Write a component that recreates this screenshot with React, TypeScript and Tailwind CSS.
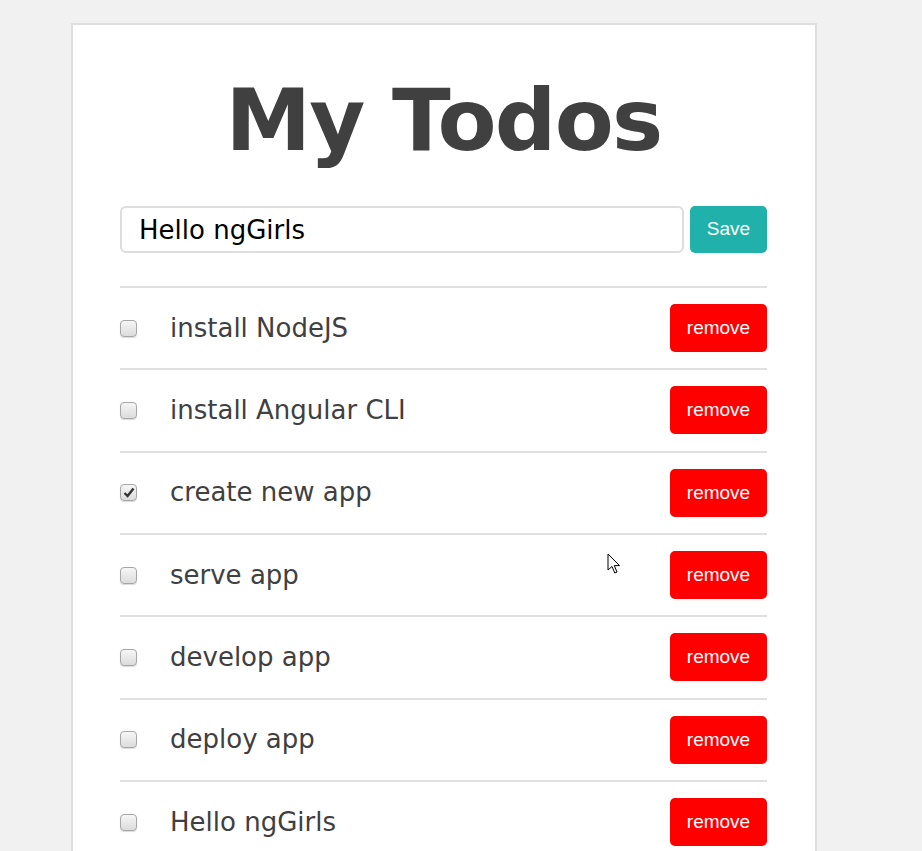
import React from "react";

const todos = [
  { title: "install NodeJS", done: false },
  { title: "install Angular CLI", done: false },
  { title: "create new app", done: true },
  { title: "serve app", done: false },
  { title: "develop app", done: false },
  { title: "deploy app", done: false },
  { title: "Hello ngGirls", done: false },
];

function Checkbox({ checked }: { checked: boolean }) {
  return (
    <span className="flex h-[17px] w-[17px] shrink-0 items-center justify-center rounded-[4px] border border-[#a6a6a6] bg-gradient-to-b from-[#f6f6f6] to-[#dcdcdc] shadow-[0_1px_1px_rgba(0,0,0,0.15)]">
      {checked && (
        <svg width="12" height="11" viewBox="0 0 12 11">
          <path d="M1.5 6 L4.6 9 L10.5 1.5" fill="none" stroke="#333" strokeWidth="2.4" />
        </svg>
      )}
    </span>
  );
}

export default function App() {
  return (
    <div className="relative min-h-[851px] overflow-hidden bg-[#f1f1f1] font-['DejaVu_Sans',Verdana,sans-serif]">
      <div className="ml-[71px] mt-[23px] w-[746px] border-2 border-b-0 border-[#dedede] bg-white pl-[47px] pr-[48px] pt-[52px] pb-10">
        <h1 className="text-center text-[86px] font-bold leading-none tracking-[-0.02em] text-[#404040]">
          My Todos
        </h1>

        <div className="mt-[43px] flex gap-[6px]">
          <input
            className="h-[47px] flex-1 rounded-[6px] border-2 border-[#dddddd] px-[17px] text-[26px] text-black outline-none"
            defaultValue="Hello ngGirls"
          />
          <button className="h-[47px] w-[77px] rounded-[5px] bg-[#20b2aa] font-['Liberation_Sans',Arial,sans-serif] text-[19px] text-white">
            Save
          </button>
        </div>

        <ul className="mt-[33px]">
          {todos.map((todo) => (
            <li
              key={todo.title}
              className="flex h-[82.33px] items-center border-t-2 border-[#e0e0e0]"
            >
              <Checkbox checked={todo.done} />
              <span className="ml-[33px] flex-1 text-[26px] text-[#404040]">{todo.title}</span>
              <button className="h-[48px] w-[97px] rounded-[5px] bg-[#ff0000] font-['Liberation_Sans',Arial,sans-serif] text-[19px] text-white">
                remove
              </button>
            </li>
          ))}
        </ul>
      </div>

      <svg
        className="pointer-events-none absolute left-[607px] top-[553px]"
        width="14"
        height="24"
        viewBox="0 0 14 24"
      >
        <path
          d="M1 1 L1 17 L5 13.5 L7.8 20 L10 19 L7.3 12.6 L12.5 12.6 Z"
          fill="#fff"
          stroke="#000"
          strokeWidth="1"
          strokeLinejoin="round"
        />
      </svg>

      <div className="absolute bottom-0 left-0 h-[2px] w-full bg-[#222]" />
    </div>
  );
}
